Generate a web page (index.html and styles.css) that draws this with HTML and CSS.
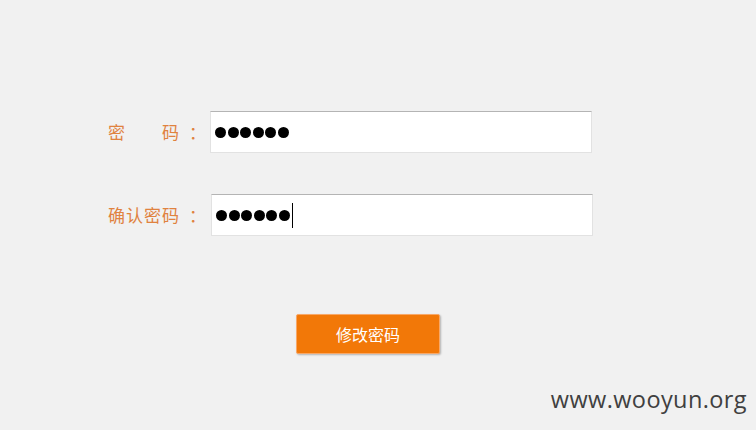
FILE: index.html
```html
<!DOCTYPE html>
<html>
<head>
<meta charset="utf-8">
<link rel="stylesheet" href="styles.css">
</head>
<body>
<div class="page">
  <form class="form">
    <div class="row">
      <label class="label"><span class="ch">密</span><span class="gap"></span><span class="ch">码</span><span class="colon">：</span></label>
      <div class="field"><span class="dot"></span><span class="dot"></span><span class="dot"></span><span class="dot"></span><span class="dot"></span><span class="dot"></span></div>
    </div>
    <div class="row row2">
      <label class="label"><span class="ch">确认密码</span><span class="colon">：</span></label>
      <div class="field field2"><span class="dot"></span><span class="dot"></span><span class="dot"></span><span class="dot"></span><span class="dot"></span><span class="dot"></span><span class="caret"></span></div>
    </div>
    <div class="actions">
      <button type="button" class="btn">修改密码</button>
    </div>
  </form>
  <div class="mark">www.wooyun.org</div>
</div>
</body>
</html>
```
FILE: styles.css
```css
html, body {
  margin: 0;
  padding: 0;
  background: #f1f1f1;
}
.page {
  width: 756px;
  height: 430px;
  position: relative;
  font-family: "Noto Sans CJK SC", "Liberation Sans", sans-serif;
}
.form {
  padding-top: 111px;
  padding-left: 108px;
}
.row {
  display: flex;
  align-items: center;
  height: 42px;
}
.row2 {
  margin-top: 41px;
}
.label {
  width: 102px;
  display: flex;
  align-items: center;
  color: #e0823f;
  font-size: 17px;
  letter-spacing: 1px;
  line-height: 20px;
}
.gap {
  width: 36px;
}
.colon {
  margin-left: 9px;
}
.field {
  box-sizing: border-box;
  width: 382px;
  height: 42px;
  background: #fff;
  border: 1px solid #e2e2e2;
  border-top-color: #b4b4b4;
  display: flex;
  align-items: center;
  padding-left: 4px;
  gap: 1.6px;
}
.field2 {
  margin-left: 1px;
}
.dot {
  width: 11px;
  height: 11px;
  border-radius: 50%;
  background: #000;
}
.caret {
  width: 1px;
  height: 25px;
  background: #000;
  margin-left: 0px;
}
.actions {
  padding-left: 188px;
  margin-top: 78px;
}
.btn {
  box-sizing: border-box;
  width: 144px;
  height: 40px;
  background: #f27808;
  color: #fff;
  font-family: "Noto Sans CJK SC", sans-serif;
  font-size: 16px;
  border: 1px solid #f8a868;
  border-radius: 2px;
  box-shadow: 1px 1px 2px rgba(0,0,0,0.25);
  padding: 0;
}
.mark {
  position: absolute;
  right: 9px;
  top: 383px;
  font-family: "Open Sans", sans-serif;
  font-size: 23.5px;
  color: #404040;
  letter-spacing: 0.4px;
}
```
